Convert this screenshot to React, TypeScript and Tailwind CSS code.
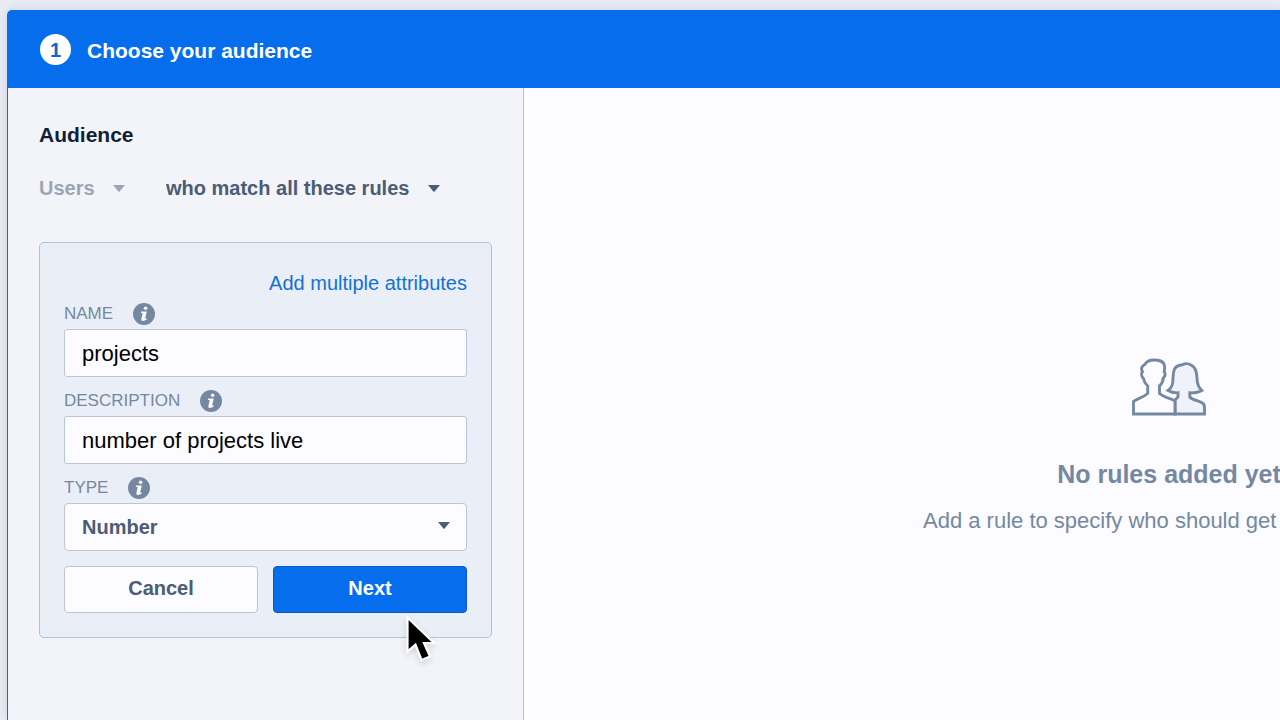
import React from 'react';

const Caret = ({ className = '' }: { className?: string }) => (
  <svg viewBox="0 0 12 7" className={`pointer-events-none h-[7px] w-3 fill-current ${className}`} aria-hidden="true">
    <path d="M0 0h12L6.6 6.4a.8.8 0 0 1-1.2 0z" />
  </svg>
);

const InfoIcon = () => (
  <svg viewBox="0 0 22 22" className="h-[22px] w-[22px]" aria-hidden="true">
    <circle cx="11" cy="11" r="11" fill="#7489a1" />
    <circle cx="12.6" cy="5.2" r="1.8" fill="#fbfafe" />
    <path d="M8.2 8.4h5.6l-1.7 7.1h1.7l-.3 1.3c-1.2.7-2.4 1.1-3.5 1.1-1.4 0-1.9-.8-1.6-2l1.3-5.9H7.8z" fill="#fbfafe" />
  </svg>
);

const PeopleIcon = () => (
  <svg viewBox="0 0 74 58" className="h-[58px] w-[74px]" fill="none" stroke="#7489a1" strokeWidth="2.9" aria-hidden="true">
    <path
      d="M43 56V42L46 39V34.8C42 35 38.5 34 36 32.5C39.5 30 40.7 27 40.9 23C41.2 18 40.8 15 42.5 11C44.5 7.5 48.5 7 50.5 6.8C53 5.2 56.500 5.5 59.5 7.2C63.5 9.5 64.700 13.5 64.900 19C65 25 65.600 29 69.800 32.5C67 34.2 63 35 57.800 34.8V39C61 42.8 68 42.5 71.500 45.8C72.500 47 72.500 48.5 72.500 50V56Z"
      fill="#eff3f9"
    />
    <path
      d="M1.5 56V43.5C6 40.5 11 39.5 15.7 35.5V28C12.5 25 11.8 22.5 11.5 20.5C9.5 18.5 9 15.5 10.5 13.8C8.8 11 9.5 8 12.8 6.5C15 2.5 20 1.600 25.5 2.3C32 3 33.6 7 32.2 13.8C33.8 15.5 33.2 18.5 31.2 20.2C31 24 30 26 27.5 28V35.5C32 39.5 39 40.5 43 43V56Z"
      fill="#fcfbff"
    />
  </svg>
);

const FieldLabel = ({ htmlFor, children }: { htmlFor: string; children: React.ReactNode }) => (
  <div className="flex h-[31px] items-center gap-5">
    <label htmlFor={htmlFor} className="text-[17px] text-[#7489a1] uppercase">
      {children}
    </label>
    <InfoIcon />
  </div>
);

const inputClass =
  'block h-12 w-full rounded-[3px] border border-[#b9c6d8] bg-[#fcfbff] px-[17px] pt-0.5 text-[22px] text-black outline-none';

const AttributeForm = () => (
  <form
    className="relative mt-[38px] rounded-[5px] border border-[#b3c1d6] bg-[#eaeef6] px-6 pt-7 pb-6"
    onSubmit={(e) => e.preventDefault()}
  >
    <div className="text-right">
      <a href="#multiple" className="block text-xl leading-6 text-[#1271d6]">
        Add multiple attributes
      </a>
    </div>

    <div className="mt-[3px]">
      <FieldLabel htmlFor="name">Name</FieldLabel>
      <input id="name" type="text" defaultValue="projects" className={inputClass} />
    </div>

    <div className="mt-2">
      <FieldLabel htmlFor="description">Description</FieldLabel>
      <input id="description" type="text" defaultValue="number of projects live" className={inputClass} />
    </div>

    <div className="mt-2">
      <FieldLabel htmlFor="type">Type</FieldLabel>
      <div className="relative text-[#4b5c75]">
        <select
          id="type"
          className="block h-12 w-full appearance-none rounded border border-[#bfc5d0] bg-[#fcfbff] px-[17px] text-xl font-bold outline-none"
        >
          <option>Number</option>
        </select>
        <Caret className="absolute top-[19px] right-[17px]" />
      </div>
    </div>

    <div className="mt-[15px] grid grid-cols-2 gap-[15px]">
      <button type="button" className="h-[47px] rounded border border-[#bfc5d0] bg-[#fcfbff] pb-1 text-xl font-bold text-[#4b5c75]">
        Cancel
      </button>
      <button type="submit" className="h-[47px] rounded border border-[#0a58c4] bg-[#066eec] pb-1 text-xl font-bold text-white">
        Next
      </button>
    </div>

    {/* Mouse pointer */}
    <svg viewBox="0 0 32 50" className="pointer-events-none absolute right-[54px] -bottom-7 h-[50px] w-8 drop-shadow-md" aria-hidden="true">
      <path d="M2.5 2.5v34l8-7 6 15.5 8.5-3.5-6-13.5h10z" fill="#000" stroke="#fff" strokeWidth="2.2" />
    </svg>
  </form>
);

const Sidebar = () => (
  <aside className="w-[516px] shrink-0 border-r border-[#b3c1d6] bg-[#f2f4fa] px-[31px] pt-[31px]">
    <h2 className="text-[21px] leading-8 font-bold text-[#101f35]">Audience</h2>

    <div className="mt-[21px] flex h-8 items-center text-xl font-bold">
      <div className="relative flex items-center text-[#9da5b5]">
        <select aria-label="Audience type" className="appearance-none pr-[30px] outline-none">
          <option>Users</option>
        </select>
        <Caret className="absolute right-0" />
      </div>
      <div className="relative ml-[41px] flex items-center text-[#4b5c75]">
        <select aria-label="Rule matching" className="appearance-none pr-[30px] outline-none">
          <option>who match all these rules</option>
        </select>
        <Caret className="absolute right-0" />
      </div>
    </div>

    <AttributeForm />
  </aside>
);

const EmptyState = () => (
  <section className="flex min-w-[1290px] flex-1 flex-col items-center bg-[#fcfbff] pt-[270px] text-[#7489a1]">
    <PeopleIcon />
    <h3 className="mt-10 text-[25px] leading-9 font-bold">No rules added yet</h3>
    <p className="mt-[17px] w-[492px] text-[22px] leading-6 whitespace-nowrap">Add a rule to specify who should get</p>
  </section>
);

const App = () => {
  return (
    <div className="min-h-screen overflow-hidden bg-[#e9ebf3] pt-[10px] pl-[7px] font-['Liberation_Sans',Arial,sans-serif]">
      <div className="overflow-hidden rounded-tl-[5px] bg-[#066eec] pl-px shadow-[0_0_8px_rgba(60,70,110,0.15)]">
        <header className="flex h-[78px] items-center gap-4 px-8 text-white">
          <span className="flex h-[31px] w-[31px] items-center justify-center rounded-full bg-white pt-0.5 text-xl font-bold text-[#1463c8]">
            1
          </span>
          <h1 className="pt-1 text-[21px] leading-8 font-bold">Choose your audience</h1>
        </header>

        <div className="flex min-h-[calc(100vh-88px)]">
          <Sidebar />
          <EmptyState />
        </div>
      </div>
    </div>
  );
};

export default App;
